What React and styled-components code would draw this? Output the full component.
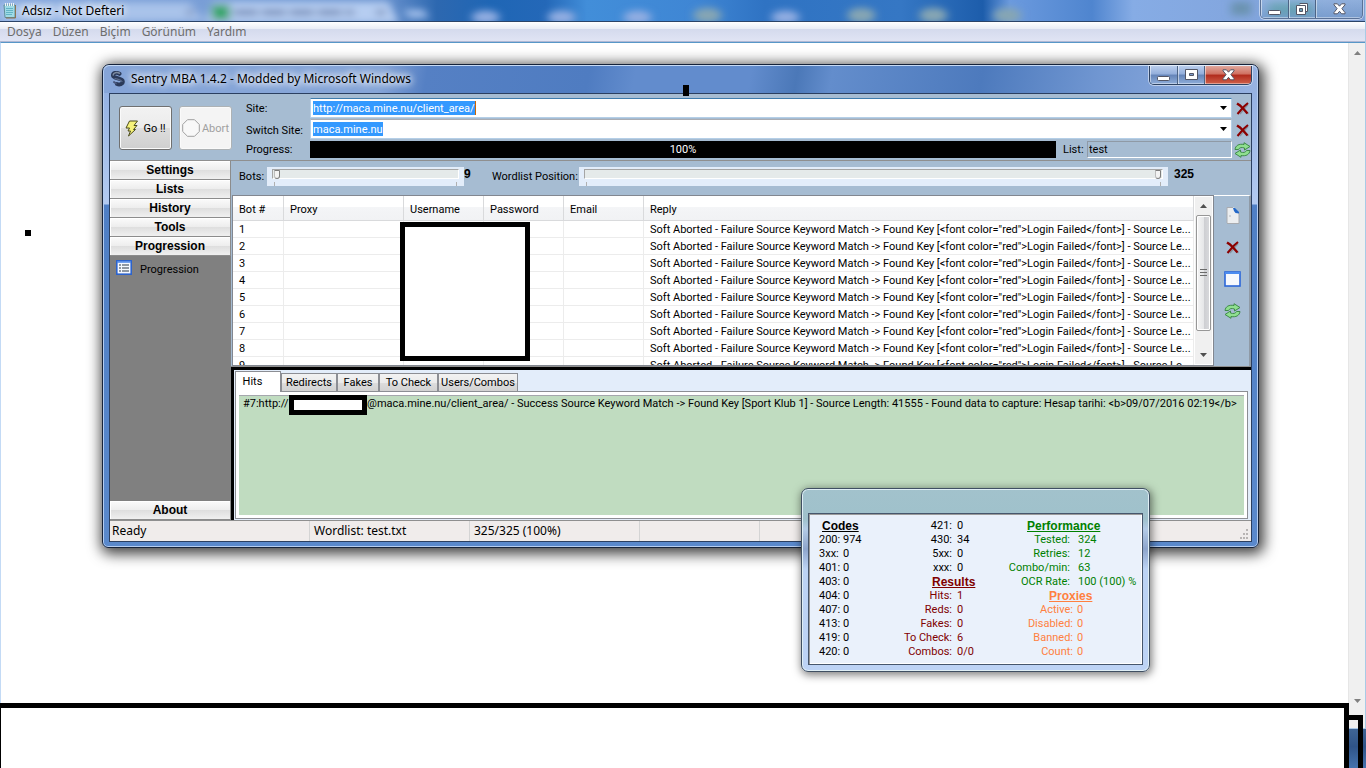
import { useState } from "react"
import styled, { createGlobalStyle, css } from "styled-components"

const GlobalStyle = createGlobalStyle`
    * {
        box-sizing: border-box;
    }

    body {
        margin: 0;
        overflow: hidden;
        font-family: Roboto, "Liberation Sans", sans-serif;
        font-size: 11px;
        color: #000000;
    }

    button, input {
        font: inherit;
        color: inherit;
    }
`

const segoe = css`
    font-family: "Noto Sans", "Open Sans", sans-serif;
    font-size: 12px;
`

const heading = css`
    font-family: "Liberation Sans", Arial, sans-serif;
    font-size: 12px;
    font-weight: 700;
`

const Desktop = styled.div`
    position: relative;
    display: flex;
    flex-direction: column;
    min-height: 100vh;
    overflow: hidden;
`

/* ---------- Notepad ---------- */

const Notepad = styled.main`
    flex: 1;
    display: flex;
    flex-direction: column;
    border-right: 1px solid #a8cbe6;
`

const NotepadTitle = styled.header`
    ${segoe}
    position: relative;
    display: flex;
    align-items: center;
    gap: 6px;
    height: 22px;
    padding-left: 3px;
    border-bottom: 1px solid #2b4468;
    background: #4a86cf;
    overflow: hidden;
`

const Wallpaper = styled.svg`
    position: absolute;
    inset: 0;
    width: 100%;
    height: 100%;
`

const TitleText = styled.h1`
    position: relative;
    margin: 0;
    font-size: 12px;
    font-weight: 400;
    line-height: 20px;
    text-shadow: 0 0 6px #ffffff, 0 0 8px #ffffff, 0 0 10px #dfeaff;
`

const TitleIcon = styled.svg`
    position: relative;
    flex: none;
`

const CaptionButtons = styled.div`
    position: relative;
    display: flex;
    align-self: flex-start;
    margin: 0 ${props => props.$active ? '5px' : '2px'} 0 auto;
    border: 1px solid ${props => props.$active ? '#2e4363' : '#5a7196'};
    border-top: 0;
    border-radius: 0 0 5px 5px;
    box-shadow: 0 0 0 1px rgba(255, 255, 255, 0.5);
    overflow: hidden;
`

const CaptionButton = styled.button`
    display: grid;
    place-items: center;
    width: ${props => props.$wide ? '47px' : '27px'};
    height: 18px;
    padding: 0;
    border: 0;
    border-left: ${props => props.$first ? '0' : '1px solid #4d6485'};
    box-shadow: inset 1px 0 rgba(255, 255, 255, 0.5), inset 0 -1px rgba(255, 255, 255, 0.4);
    background: ${props => props.$background};
`

const MenuBar = styled.nav`
    ${segoe}
    display: flex;
    gap: 11px;
    height: 20px;
    padding-left: 7px;
    border-bottom: 1px solid #b0b8d4;
    background: linear-gradient(#ffffff, #e9edf6 35%, #d4daed 36%, #e0e4f4);
`

const MenuItem = styled.button`
    padding: 0;
    border: 0;
    background: none;
    line-height: 18px;
    color: #6d6d6d;
`

const Editor = styled.section`
    flex: 1;
    display: flex;
    justify-content: flex-end;
    border-top: 1px solid #5797c8;
    border-left: 1px solid #c3daf5;
    background: #ffffff;
`

const EditorScroll = styled.div`
    display: flex;
    flex-direction: column;
    align-items: center;
    justify-content: space-between;
    width: 17px;
    padding: 8px 0 25px;
    border-left: 1px solid #e6e6e6;
    background: #f0f0f0;
`

const Taskbar = styled.footer`
    height: 40px;
    border-top: 1px solid #a9c8e8;
    background: linear-gradient(#3f6595, #2f5488 45%, #4673ae);
`

/* ---------- Sentry window ---------- */

const Window = styled.section`
    position: absolute;
    top: 64px;
    left: 102px;
    right: 107px;
    padding: 0 6px 5px;
    border: 1px solid #16233a;
    border-radius: 7px 7px 6px 6px;
    box-shadow: inset 0 0 0 1px #b5cdf0, 2px 3px 14px 3px rgba(0, 0, 0, 0.75);
    background: linear-gradient(#8eace0, #b3caf0 139px, #4f7fc5 140px, #5a89cc);
`

const WindowTitle = styled.header`
    ${segoe}
    display: flex;
    align-items: center;
    gap: 5px;
    height: 28px;
    margin: 0 -5px;
    padding: 0 0 2px 6px;
    border-top: 1px solid #c6daf5;
    border-radius: 6px 6px 0 0;
    background: linear-gradient(100deg, #86a5d8, #86a5d8 24%, #5580c4 28%, #4f7cc1 42%, #628ccd 46%, #628ccd 56%, #4b78b8 60%, #638dcc 63%, #4d7abd 76%, #7096d1 86%, #98b3e2);
`

const Client = styled.div`
    border: 1px solid #2b3f60;
    background: #a6bcd2;
`

const Toolbar = styled.div`
    display: flex;
    padding: 4px 0 2px 9px;
    border-bottom: 1px solid #8f8f8f;
`

const ActionButton = styled.button`
    display: flex;
    align-items: center;
    justify-content: center;
    gap: 4px;
    width: 53px;
    height: 44px;
    margin: 8px 7px 0 0;
    padding: 0;
    border: 1px solid #707070;
    border-radius: 3px;
    box-shadow: inset 0 0 0 1px #fafafa;
    background: linear-gradient(#f2f2f2, #ebebeb 50%, #dddddd 51%, #cfcfcf);

    &:disabled {
        gap: 2px;
        border-color: #adb2b5;
        background: #f4f4f4;
        color: #a0a0a0;
    }
`

const Fields = styled.div`
    flex: 1;
    display: grid;
    grid-template-columns: 64px 1fr 19px;
    grid-template-rows: 21px 22px 17px;
    margin-left: 7px;
    align-items: center;
`

const Combo = styled.div`
    display: flex;
    align-items: center;
    height: 20px;
    align-self: start;
    padding: 0 2px;
    border: 1px solid #b5cfe7;
    border-top-color: ${props => props.$active ? '#3d7bad' : '#abadb3'};
    background: #ffffff;
`

const ComboInput = styled.input`
    field-sizing: content;
    height: 14px;
    padding: 0;
    border: 0;
    border-right: ${props => props.$caret ? '1px solid #cc6600' : '0'};
    outline: 0;
    background: #3399ff;
    color: #ffffff;
`

const ComboArrow = styled.button`
    display: grid;
    place-items: center;
    width: 12px;
    height: 16px;
    margin-left: auto;
    padding: 0;
    border: 0;
    background: none;
`

const IconButton = styled.button`
    display: grid;
    place-items: center;
    justify-self: end;
    width: 17px;
    height: 18px;
    padding: 0;
    border: 0;
    background: none;
`

const ProgressRow = styled.div`
    display: flex;
    align-items: center;
    height: 17px;
`

const ProgressBar = styled.div`
    flex: 1;
    height: 17px;
    background: #000000;
    color: #ffffff;
    line-height: 17px;
    text-align: center;
`

const ListLabel = styled.label`
    width: 31px;
    padding-left: 7px;
`

const ListInput = styled.input`
    width: 145px;
    height: 17px;
    padding: 0 1px;
    border: 1px solid #ffffff;
    border-top-color: #8f9aa6;
    border-left-color: #8f9aa6;
    background: transparent;
`

const Body = styled.div`
    display: flex;
`

const Sidebar = styled.nav`
    display: flex;
    flex-direction: column;
    width: 121px;
    background: #808080;
`

const SidebarButton = styled.button`
    ${heading}
    height: 19px;
    padding: 0;
    border: 0;
    border-right: 1px solid #8c8c8c;
    border-bottom: 1px solid #8c8c8c;
    box-shadow: inset 1px 1px #ffffff;
    background: linear-gradient(#fbfbfb, #ededed 50%, #dedede 51%, #f0f0f0);
    line-height: 16px;
`

const SidebarItem = styled.a`
    flex: 1;
    display: flex;
    align-items: flex-start;
    gap: 8px;
    padding: 4px 6px;
    color: #000000;
    line-height: 19px;
    text-decoration: none;
`

const Content = styled.div`
    flex: 1;
    min-width: 0;
    display: flex;
    flex-direction: column;
`

const SliderRow = styled.div`
    display: flex;
    align-items: flex-start;
    height: 34px;
    padding: 6px 0 0 8px;
`

const SliderLabel = styled.label`
    width: ${props => props.$width};
    line-height: 19px;
    white-space: nowrap;
`

const SliderValue = styled.output`
    ${heading}
    width: ${props => props.$width};
    padding-left: ${props => props.$indent};
    line-height: 14px;
`

const Slider = styled.input`
    appearance: none;
    width: ${props => props.$width};
    flex: ${props => props.$grow ? '1' : 'none'};
    height: 19px;
    margin: 0;
    padding: 2px 5px 7px;
    background:
        linear-gradient(#b0b0b0, #b0b0b0) 7px 100% / 1px 4px no-repeat,
        linear-gradient(#b0b0b0, #b0b0b0) calc(100% - 7px) 100% / 1px 4px no-repeat,
        #e3edfa;

    &::-webkit-slider-runnable-track {
        height: 10px;
        padding: 0 1px;
        border: 1px solid #ffffff;
        border-top-color: #a5a5a5;
        border-left-color: #a5a5a5;
        background: #e5eaea;
    }

    &::-webkit-slider-thumb {
        appearance: none;
        width: 6px;
        height: 9px;
        border: 1px solid #7d7d7d;
        border-left-color: #bdbdbd;
        border-radius: 1px 1px 3px 3px;
        background: #f3f3f3;
    }
`

const ListArea = styled.div`
    display: flex;
    height: 172px;
    border-bottom: 1px solid #8f8f8f;
`

const ListBox = styled.div`
    flex: 1;
    min-width: 0;
    display: flex;
    margin-left: 1px;
    border: 1px solid #828790;
    background: #ffffff;
    overflow: hidden;
`

const BotTable = styled.table`
    width: 100%;
    table-layout: fixed;
    border-collapse: separate;
    border-spacing: 0;

    th, td {
        padding: 2px 0 0 6px;
        border-right: 1px solid #ececec;
        border-bottom: 1px solid #ececec;
        font-weight: 400;
        text-align: left;
        white-space: nowrap;
        overflow: hidden;
    }

    th {
        height: 25px;
        border-color: #d9dadc;
        background: linear-gradient(#ffffff 45%, #f4f5f7 46%, #f1f2f4);
    }

    td {
        height: 17px;
        line-height: 14px;
    }
`

const TableHolder = styled.div`
    position: relative;
    flex: 1;
    min-width: 0;
`

const Redaction = styled.div`
    flex: none;
    border: 5px solid #000000;
    background: #ffffff;
`

const CredentialsRedaction = styled(Redaction)`
    position: absolute;
    top: 26px;
    left: 167px;
    width: 130px;
    height: 139px;
`

const ListScroll = styled.div`
    display: flex;
    flex-direction: column;
    align-items: center;
    width: 17px;
    margin: 1px;
    background: #f0f0f0;
`

const ScrollArrow = styled.button`
    display: grid;
    place-items: center;
    width: 17px;
    height: 18px;
    padding: 0;
    border: 0;
    background: none;
`

const ScrollThumb = styled.div`
    display: grid;
    place-items: center;
    width: 15px;
    height: 116px;
    margin-bottom: auto;
    border: 1px solid #979797;
    border-radius: 2px;
    box-shadow: inset 0 0 0 1px #ffffff;
    background: linear-gradient(90deg, #f5f5f5, #e6e7e9 50%, #cdced2 52%, #d9dadd);
`

const SideTools = styled.div`
    display: flex;
    flex-direction: column;
    align-items: center;
    gap: 14px;
    width: 37px;
    padding: 10px 0 0 2px;
    border-top: 1px solid #ffffff;
    border-right: 2px solid #8f9aa6;
`

const Results = styled.div`
    display: flex;
    flex-direction: column;
    height: 153px;
    padding: 1px 3px 1px 1px;
    border-top: 3px solid #000000;
    border-left: 3px solid #000000;
    background: #e3edfa;
`

const Tabs = styled.div`
    display: flex;
    align-items: flex-end;
    height: 20px;
`

const Tab = styled.button`
    position: relative;
    width: ${props => props.$width};
    height: ${props => props.$active ? '21px' : '18px'};
    margin-bottom: ${props => props.$active ? '-1px' : '0'};
    padding: ${props => props.$active ? '0 11px 2px 0' : '0'};
    border: 1px solid #8c8e94;
    border-bottom: 0;
    background: ${props => props.$active ? '#ffffff' : 'linear-gradient(#f2f2f2, #ebebeb 50%, #dddddd 51%, #d2d2d2)'};
    white-space: nowrap;
`

const TabPanel = styled.div`
    flex: 1;
    padding: 3px;
    border: 1px solid #8c8e94;
    background: #ffffff;
`

const HitList = styled.ul`
    height: 100%;
    margin: 0;
    padding: 0 0 0 4px;
    box-shadow: inset 0 1px #a5a7ad;
    background: #c0dcc0;
    list-style: none;
`

const Hit = styled.li`
    display: flex;
    align-items: flex-start;
    line-height: 17px;
    white-space: nowrap;
`

const HitPrefix = styled.span`
    width: 46px;
`

const HostRedaction = styled(Redaction)`
    width: 78px;
    height: 20px;
`

const StatusBar = styled.footer`
    ${segoe}
    display: flex;
    height: 21px;
    border-top: 1px solid #8f8f8f;
    background: #f0eceb;
    line-height: 19px;
`

const StatusCell = styled.span`
    width: ${props => props.$width};
    padding-left: ${props => props.$first ? '2px' : '4px'};
    border-right: 1px solid #d4d4d4;
`

const Grip = styled.svg`
    align-self: flex-end;
    margin: 0 2px 2px auto;
`

/* ---------- Statistics window ---------- */

const StatsWindow = styled.section`
    position: absolute;
    top: 488px;
    left: 801px;
    width: 349px;
    padding: 24px 6px 6px;
    border: 1px solid #3f4f62;
    border-radius: 7px;
    box-shadow: inset 0 0 0 1px #dfeef5, 1px 2px 9px 1px rgba(0, 0, 0, 0.5);
    background: linear-gradient(#a2c2cc, #9fc1cb 30px, #b4cbe6 40px, #8ea5cb 60px, #bcd3f4 80px, #bdd3f5);
`

const StatsClient = styled.div`
    display: grid;
    grid-template-columns: 72px 92px 1fr;
    padding: 5px 6px 5px 10px;
    border: 1px solid #46566c;
    box-shadow: inset 1px 1px #9a9a9a, inset -1px -1px #ffffff;
    background: #eaf1fb;
    line-height: 14px;
`

const StatsColumn = styled.div`
    display: flex;
    flex-direction: column;
`

const StatsTitle = styled.h2`
    ${heading}
    margin: 0;
    padding-left: ${props => props.$indent};
    line-height: 14px;
    text-decoration: underline;
    color: ${props => props.$color};
`

const StatsRow = styled.div`
    display: grid;
    grid-template-columns: ${props => props.$label} 1fr;
    gap: ${props => props.$gap};
    color: ${props => props.$color};
    white-space: nowrap;

    span:first-child {
        text-align: ${props => props.$align};
    }
`

/* ---------- Marks over the desktop ---------- */

const BottomRedaction = styled(Redaction)`
    position: absolute;
    left: -4px;
    right: 17px;
    bottom: -5px;
    height: 70px;
`

const CornerRedaction = styled.div`
    position: absolute;
    right: 3px;
    bottom: 0;
    width: 14px;
    height: 53px;
    border: 5px solid #000000;
    border-width: 5px 5px 0 0;
`

const Mark = styled.div`
    position: absolute;
    top: ${props => props.$top};
    left: ${props => props.$left};
    width: 6px;
    height: ${props => props.$height};
    background: #000000;
`

/* ---------- Icons ---------- */

const MinimizeIcon = () => (
    <svg width="13" height="14" viewBox="0 0 13 14">
        <rect x="0.5" y="8.5" width="12" height="4" rx="1" fill="#ffffff" stroke="#535666" />
    </svg>
)

const MaximizeIcon = () => (
    <svg width="13" height="12" viewBox="0 0 13 12">
        <path d="M.5.5h12v10H.5zM4.500 4.500v2h4v-2z" fill="#ffffff" fillRule="evenodd" stroke="#535666" />
    </svg>
)

const RestoreIcon = () => (
    <svg width="13" height="13" viewBox="0 0 13 13">
        <path d="M3.500.5h8v8h-2" fill="#ffffff" stroke="#535666" />
        <path d="M.5 2.500h9v9h-9zM3.500 5.500v3h3v-3z" fill="#ffffff" fillRule="evenodd" stroke="#535666" />
    </svg>
)

const CloseIcon = () => (
    <svg width="13" height="12" viewBox="0 0 13 12">
        <path d="M1 .8h3.400l2.100 2.400L8.600.8H12v1L8.900 5.600 12 9.600v1.200H8.600L6.500 8.300l-2.100 2.500H1V9.600l3.100-4L1 1.800z" fill="#ffffff" stroke="#535666" />
    </svg>
)

const DeleteIcon = () => (
    <svg width="13" height="13" viewBox="0 0 13 13">
        <path d="M3 3l9.500 9M12 2.500L4 12" stroke="#8a94a0" strokeWidth="1.400" />
        <path d="M1 1.500l3 2 4 4 3.500 4" fill="none" stroke="#8b0000" strokeWidth="2.400" />
        <path d="M12 1L8 4.500 4.500 8.500 1.500 12" fill="none" stroke="#8b0000" strokeWidth="2" />
    </svg>
)

const RefreshIcon = () => (
    <svg width="17" height="16" viewBox="0 0 17 16">
        <path d="M1 7.500C1.500 3.500 5 1.500 10 2.500V.7L16 4.500 10.500 8V6C7.500 5 5.500 5.500 4.500 7.500z" fill="#8fdf8f" stroke="#3f8a4a" />
        <path d="M16 8.500C15.500 12.500 12 14.500 7 13.500v1.800L1 11.500 6.500 8v2c3 1 5 .5 6-1.500z" fill="#8fdf8f" stroke="#3f8a4a" />
    </svg>
)

const PageIcon = () => (
    <svg width="14" height="17" viewBox="0 0 14 17">
        <path d="M1 .5h7l5 5v11H1z" fill="#eceef0" />
        <path d="M1 16V.5h6M13 5v11.500H1" fill="none" stroke="#a8abb0" />
        <path d="M7 1h2l4 4v1.500L9.500 6 8 4z" fill="#2468c8" />
        <path d="M3 8h2v2H3z" fill="#cfd2d6" />
    </svg>
)

const WindowIcon = () => (
    <svg width="17" height="16" viewBox="0 0 17 16">
        <rect x="1" y="1" width="15" height="14" fill="#f7f9fd" stroke="#2b66d9" strokeWidth="1.600" />
        <path d="M1 2h15" stroke="#4b8cf0" strokeWidth="2" />
    </svg>
)

const BoltIcon = () => (
    <svg width="14" height="17" viewBox="0 0 14 17">
        <path d="M4.500 1h8L9 5.500h3L8.500 9.500h2L3.500 16l2-5H3l1.500-3H1z" fill="#f6f27a" stroke="#4a4a1a" />
    </svg>
)

const AbortIcon = () => (
    <svg width="18" height="18" viewBox="0 0 18 18">
        <path d="M5.500.7h7l4.800 4.800v7l-4.800 4.800h-7L.7 12.500v-7z" fill="#f8f8f8" stroke="#a0a0a0" />
    </svg>
)

const ListIcon = () => (
    <svg width="16" height="15" viewBox="0 0 16 15">
        <rect x="0.8" y="0.8" width="14.400" height="13.400" fill="#f4f8ff" stroke="#2c63cc" strokeWidth="1.600" />
        <path d="M1 2h14" stroke="#4b86e8" strokeWidth="1.500" />
        <path d="M3 5h2M3 8h2M3 11h2M6 5h7M6 8h7M6 11h7" stroke="#6e7884" strokeWidth="1.400" />
    </svg>
)

const NotepadIcon = () => (
    <TitleIcon width="13" height="16" viewBox="0 0 13 16">
        <path d="M1 2h11v12.500H2z" fill="#9fdbe6" stroke="#5f8c98" />
        <path d="M3 5.500h7M3 7.500h7M3 9.500h7M3 11.500h6" stroke="#63b4c6" />
        <path d="M2.500 0v3M4.500 0v3M6.500 0v3M8.500 0v3M10.500 0v3" stroke="#eef4f4" />
        <path d="M12.500 2v13H3" fill="none" stroke="#8a7350" />
    </TitleIcon>
)

const SentryIcon = () => (
    <TitleIcon width="16" height="16" viewBox="0 0 16 16">
        <path d="M9.500 2.800C6.500 1 2.800 2 3 4.500c.2 3.200 9.500 2.200 9.800 5.800.2 2.800-3.300 3.700-5.800 2.700" fill="none" stroke="#2b3a5a" strokeWidth="4" strokeLinecap="round" />
        <path d="M9.500 2.200C7 .8 3.200 1.600 3.200 4" fill="none" stroke="#7c8aa0" strokeWidth="1.600" strokeLinecap="round" />
        <path d="M5 7.500c3 1 6 1 7 3" fill="none" stroke="#5c6c8c" strokeWidth="1.200" strokeLinecap="round" />
        <path d="M6 12.500l-2-1.500" stroke="#46557a" strokeWidth="2" strokeLinecap="round" />
    </TitleIcon>
)

const ArrowIcon = ({ up, color = '#505050' }) => (
    <svg width="7" height="4" viewBox="0 0 7 4">
        <path d={up ? "M0 4L3.500 0 7 4z" : "M0 0h7L3.500 4z"} fill={color} />
    </svg>
)

const TitleBackdrop = () => (
    <Wallpaper viewBox="0 0 1366 22" preserveAspectRatio="none" aria-hidden="true">
        <defs>
            <linearGradient id="sky">
                <stop offset="0" stopColor="#86a8dd" />
                <stop offset="0.28" stopColor="#6d95d0" />
                <stop offset="0.32" stopColor="#2d68b0" />
                <stop offset="0.36" stopColor="#1f66b5" />
                <stop offset="0.4" stopColor="#2468b8" />
                <stop offset="0.43" stopColor="#428ed9" />
                <stop offset="0.51" stopColor="#3f86d4" />
                <stop offset="0.56" stopColor="#2f73c3" />
                <stop offset="0.66" stopColor="#3577c4" />
                <stop offset="0.72" stopColor="#1d5dab" />
                <stop offset="0.74" stopColor="#6b9ade" />
                <stop offset="0.8" stopColor="#4f85cf" />
                <stop offset="0.83" stopColor="#86ace5" />
                <stop offset="1" stopColor="#7f9fd6" />
            </linearGradient>
            <filter id="soft" x="-20%" y="-50%" width="140%" height="200%">
                <feGaussianBlur stdDeviation="4" />
            </filter>
        </defs>
        <rect width="1366" height="22" fill="url(#sky)" />
        <g filter="url(#soft)">
            <path d="M0 3h190l14 19H0z" fill="#a9c3ea" />
            <path d="M205 24l8-22h176l10 22z" fill="#b6cdf1" />
            <rect x="212" y="5" width="18" height="16" fill="#35a56c" />
            <path d="M234 13h120M377 13h8M187 13h6" stroke="#8096c0" strokeWidth="7" strokeDasharray="24 4" />
            <path d="M404 10h20l5 9h-20z" fill="#9dbbe8" />
            {[486, 562, 638, 786].map(x => (
                <ellipse key={x} cx={x} cy="18" rx="14" ry="7" fill="#93aee2" />
            ))}
            {[708, 862, 934, 1008].map(x => (
                <ellipse key={x} cx={x} cy="16" rx="14" ry="8" fill="#86a6b4" />
            ))}
            <rect x="1232" y="2" width="20" height="14" fill="#6b93b0" />
            <rect x="1270" y="2" width="44" height="14" fill="#4f9aa0" />
        </g>
    </Wallpaper>
)

/* ---------- Data ---------- */

const menus = ['Dosya', 'Düzen', 'Biçim', 'Görünüm', 'Yardım']

const sections = ['Settings', 'Lists', 'History', 'Tools', 'Progression']

const reply = 'Soft Aborted - Failure Source Keyword Match -> Found Key [<font color="red">Login Failed</font>] - Source Le...'

const bots = [1, 2, 3, 4, 5, 6, 7, 8, 9]

const tabs = [
    { name: 'Hits', width: '46px' },
    { name: 'Redirects', width: '56px' },
    { name: 'Fakes', width: '42px' },
    { name: 'To Check', width: '59px' },
    { name: 'Users/Combos', width: '80px' },
]

const codes = [['200:', '974'], ['3xx:', '0'], ['401:', '0'], ['403:', '0'], ['404:', '0'], ['407:', '0'], ['413:', '0'], ['419:', '0'], ['420:', '0']]
const moreCodes = [['421:', '0'], ['430:', '34'], ['5xx:', '0'], ['xxx:', '0']]
const results = [['Hits:', '1'], ['Reds:', '0'], ['Fakes:', '0'], ['To Check:', '6'], ['Combos:', '0/0']]
const performance = [['Tested:', '324'], ['Retries:', '12'], ['Combo/min:', '63'], ['OCR Rate:', '100 (100) %']]
const proxies = [['Active:', '0'], ['Disabled:', '0'], ['Banned:', '0'], ['Count:', '0']]

const StatsRows = ({ rows, label, gap, align = 'right', color = '#000000' }) => rows.map(([name, value]) => (
    <StatsRow key={name} $label={label} $gap={gap} $align={align} $color={color}>
        <span>{name}</span>
        <span>{value}</span>
    </StatsRow>
))

const glass = 'linear-gradient(#b9cdec, #93aedb 45%, #6484b8 50%, #8fadd9)'
const redGlass = 'linear-gradient(#e0a79c, #cf6f60 45%, #b02a1c 50%, #d0604a)'
const clearGlass = 'linear-gradient(rgba(160, 190, 225, 0.5), rgba(110, 150, 190, 0.4))'

const App = () => {
    const [tab, setTab] = useState('Hits')
    const [site, setSite] = useState('http://maca.mine.nu/client_area/')
    const [switchSite, setSwitchSite] = useState('maca.mine.nu')

    return (
        <Desktop>
            <GlobalStyle />
            <Notepad>
                <NotepadTitle>
                    <TitleBackdrop />
                    <NotepadIcon />
                    <TitleText>Adsız - Not Defteri</TitleText>
                    <CaptionButtons>
                        <CaptionButton $first $background={clearGlass} aria-label="Minimize"><MinimizeIcon /></CaptionButton>
                        <CaptionButton $background={clearGlass} aria-label="Restore"><RestoreIcon /></CaptionButton>
                        <CaptionButton $wide $background={clearGlass} aria-label="Close"><CloseIcon /></CaptionButton>
                    </CaptionButtons>
                </NotepadTitle>
                <MenuBar>
                    {menus.map(menu => <MenuItem key={menu}>{menu}</MenuItem>)}
                </MenuBar>
                <Editor>
                    <EditorScroll>
                        <ArrowIcon up color="#808080" />
                        <ArrowIcon color="#808080" />
                    </EditorScroll>
                </Editor>
            </Notepad>
            <Taskbar />

            <Window>
                <WindowTitle>
                    <SentryIcon />
                    <TitleText>Sentry MBA 1.4.2 - Modded by Microsoft Windows</TitleText>
                    <CaptionButtons $active>
                        <CaptionButton $first $background={glass} aria-label="Minimize"><MinimizeIcon /></CaptionButton>
                        <CaptionButton $background={glass} aria-label="Maximize"><MaximizeIcon /></CaptionButton>
                        <CaptionButton $wide $background={redGlass} aria-label="Close"><CloseIcon /></CaptionButton>
                    </CaptionButtons>
                </WindowTitle>
                <Client>
                    <Toolbar>
                        <ActionButton><BoltIcon />Go !!</ActionButton>
                        <ActionButton disabled><AbortIcon />Abort</ActionButton>
                        <Fields>
                            <label htmlFor="site">Site:</label>
                            <Combo $active>
                                <ComboInput id="site" $caret value={site} onChange={e => setSite(e.target.value)} />
                                <ComboArrow aria-label="Open sites"><ArrowIcon color="#000000" /></ComboArrow>
                            </Combo>
                            <IconButton aria-label="Delete site"><DeleteIcon /></IconButton>
                            <label htmlFor="switch">Switch Site:</label>
                            <Combo>
                                <ComboInput id="switch" value={switchSite} onChange={e => setSwitchSite(e.target.value)} />
                                <ComboArrow aria-label="Open switch sites"><ArrowIcon color="#000000" /></ComboArrow>
                            </Combo>
                            <IconButton aria-label="Delete switch site"><DeleteIcon /></IconButton>
                            <span id="progress">Progress:</span>
                            <ProgressRow>
                                <ProgressBar role="progressbar" aria-labelledby="progress" aria-valuenow={100}>100%</ProgressBar>
                                <ListLabel htmlFor="list">List:</ListLabel>
                                <ListInput id="list" defaultValue="test" />
                            </ProgressRow>
                            <IconButton aria-label="Reload list"><RefreshIcon /></IconButton>
                        </Fields>
                    </Toolbar>
                    <Body>
                        <Sidebar>
                            {sections.map(name => <SidebarButton key={name}>{name}</SidebarButton>)}
                            <SidebarItem href="#progression"><ListIcon />Progression</SidebarItem>
                            <SidebarButton>About</SidebarButton>
                        </Sidebar>
                        <Content>
                            <SliderRow>
                                <SliderLabel $width="28px" htmlFor="bots">Bots:</SliderLabel>
                                <Slider id="bots" type="range" min="0" max="300" defaultValue="0" $width="197px" />
                                <SliderValue $width="28px" $indent="0">9</SliderValue>
                                <SliderLabel $width="87px" htmlFor="position">Wordlist Position:</SliderLabel>
                                <Slider id="position" type="range" min="0" max="325" defaultValue="325" $grow />
                                <SliderValue $width="83px" $indent="6px">325</SliderValue>
                            </SliderRow>
                            <ListArea>
                                <ListBox>
                                    <TableHolder>
                                        <BotTable>
                                            <colgroup>
                                                <col width="51" />
                                                <col width="120" />
                                                <col width="80" />
                                                <col width="80" />
                                                <col width="80" />
                                                <col />
                                            </colgroup>
                                            <thead>
                                                <tr>
                                                    <th>Bot #</th>
                                                    <th>Proxy</th>
                                                    <th>Username</th>
                                                    <th>Password</th>
                                                    <th>Email</th>
                                                    <th>Reply</th>
                                                </tr>
                                            </thead>
                                            <tbody>
                                                {bots.map(bot => (
                                                    <tr key={bot}>
                                                        <td>{bot}</td>
                                                        <td />
                                                        <td />
                                                        <td />
                                                        <td />
                                                        <td>{reply}</td>
                                                    </tr>
                                                ))}
                                            </tbody>
                                        </BotTable>
                                        <CredentialsRedaction />
                                    </TableHolder>
                                    <ListScroll>
                                        <ScrollArrow aria-label="Scroll up"><ArrowIcon up /></ScrollArrow>
                                        <ScrollThumb>
                                            <svg width="7" height="8" viewBox="0 0 7 8">
                                                <path d="M0 .5h7M0 3.500h7M0 6.500h7" stroke="#6b6b6b" />
                                            </svg>
                                        </ScrollThumb>
                                        <ScrollArrow aria-label="Scroll down"><ArrowIcon /></ScrollArrow>
                                    </ListScroll>
                                </ListBox>
                                <SideTools>
                                    <IconButton aria-label="New"><PageIcon /></IconButton>
                                    <IconButton aria-label="Remove"><DeleteIcon /></IconButton>
                                    <IconButton aria-label="Window"><WindowIcon /></IconButton>
                                    <IconButton aria-label="Refresh"><RefreshIcon /></IconButton>
                                </SideTools>
                            </ListArea>
                            <Results>
                                <Tabs>
                                    {tabs.map(({ name, width }) => (
                                        <Tab key={name} $active={tab === name} $width={width} onClick={() => setTab(name)}>{name}</Tab>
                                    ))}
                                </Tabs>
                                <TabPanel>
                                    <HitList>
                                        <Hit>
                                            <HitPrefix>#7:http://</HitPrefix>
                                            <HostRedaction />
                                            <span>{'@maca.mine.nu/client_area/ - Success Source Keyword Match -> Found Key [Sport Klub 1] - Source Length: 41555 - Found data to capture: Hesap tarihi: <b>09/07/2016 02:19</b>'}</span>
                                        </Hit>
                                    </HitList>
                                </TabPanel>
                            </Results>
                        </Content>
                    </Body>
                    <StatusBar>
                        <StatusCell $first $width="200px">Ready</StatusCell>
                        <StatusCell $width="160px">Wordlist: test.txt</StatusCell>
                        <StatusCell $width="170px">325/325 (100%)</StatusCell>
                        <StatusCell $width="120px" />
                        <Grip width="10" height="10" viewBox="0 0 10 10">
                            <path d="M7 0h2v2H7zM4 4h2v2H4zM7 4h2v2H7zM1 8h2v2H1zM4 8h2v2H4zM7 8h2v2H7z" fill="#b8b4b3" />
                        </Grip>
                    </StatusBar>
                </Client>
            </Window>

            <StatsWindow>
                <StatsClient>
                    <StatsColumn>
                        <StatsTitle $indent="3px" $color="#000000">Codes</StatsTitle>
                        <StatsRows rows={codes} label="22px" gap="2px" align="left" />
                    </StatsColumn>
                    <StatsColumn>
                        <StatsRows rows={moreCodes} label="61px" gap="5px" />
                        <StatsTitle $indent="41px" $color="#800000">Results</StatsTitle>
                        <StatsRows rows={results} label="61px" gap="5px" color="#800000" />
                    </StatsColumn>
                    <StatsColumn>
                        <StatsTitle $indent="44px" $color="#008000">Performance</StatsTitle>
                        <StatsRows rows={performance} label="87px" gap="8px" color="#008000" />
                        <StatsTitle $indent="66px" $color="#ff8040">Proxies</StatsTitle>
                        <StatsRows rows={proxies} label="90px" gap="4px" color="#ff8040" />
                    </StatsColumn>
                </StatsClient>
            </StatsWindow>

            <Mark $top="230px" $left="25px" $height="6px" />
            <Mark $top="85px" $left="683px" $height="11px" />
            <CornerRedaction />
            <BottomRedaction />
        </Desktop>
    )
}

export default App
